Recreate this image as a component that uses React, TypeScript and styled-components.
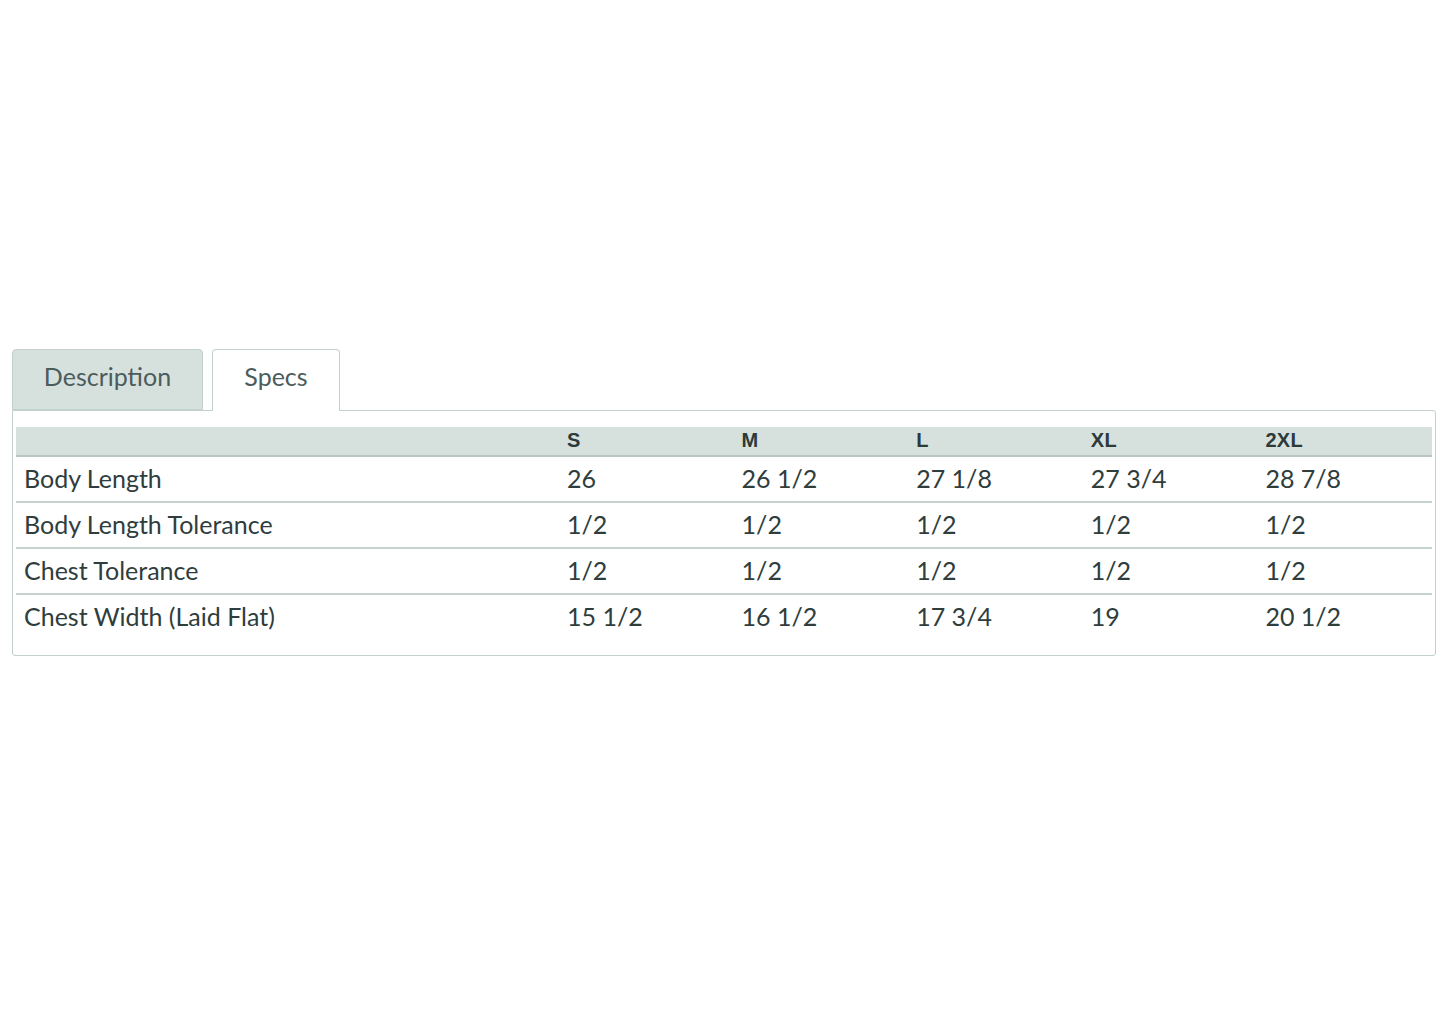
import React from "react";
import styled, { createGlobalStyle } from "styled-components";

const Global = createGlobalStyle`
  html, body { margin: 0; padding: 0; background: #ffffff; }
  body { font-family: Lato, "Noto Sans", sans-serif; color: #2f3d3d; }
`;

const Page = styled.div`
  padding: 349px 10px 0 12px;
  width: 1445px;
  box-sizing: border-box;
`;

const TabBar = styled.div`
  display: flex;
  gap: 9px;
  align-items: flex-end;
  position: relative;
  z-index: 1;
`;

const Tab = styled.div<{ $active?: boolean }>`
  box-sizing: border-box;
  height: ${(p) => (p.$active ? 62 : 61)}px;
  margin-bottom: ${(p) => (p.$active ? -1 : 0)}px;
  width: ${(p) => (p.$active ? 128 : 191)}px;
  display: flex;
  align-items: center;
  justify-content: center;
  padding-bottom: ${(p) => (p.$active ? 9 : 8)}px;
  font-size: 25px;
  color: #4b5c5c;
  background: ${(p) => (p.$active ? "#ffffff" : "#d6e1de")};
  border: 1px solid #c3d1cd;
  border-bottom: ${(p) => (p.$active ? "none" : "1px solid #c3d1cd")};
  border-radius: 4px 4px 0 0;
`;

const Panel = styled.div`
  box-sizing: border-box;
  width: 1424px;
  border: 1px solid #c3d1cd;
  border-radius: 0 3px 3px 3px;
  padding: 16px 3px 16px 3px;
`;

const Table = styled.table`
  width: 100%;
  border-collapse: collapse;
  table-layout: fixed;
`;

const HeadRow = styled.tr`
  background: #d6e1de;
  border-bottom: 2px solid #b9c7c4;
`;

const Th = styled.th<{ $first?: boolean }>`
  width: ${(p) => (p.$first ? "527px" : "auto")};
  height: 26px;
  padding: 0 8px 2px;
  text-align: left;
  font-family: "Liberation Sans", Arial, sans-serif;
  font-weight: 700;
  font-size: 20px;
  letter-spacing: 0.3px;
  color: #2c3a3a;
  vertical-align: middle;
`;

const Row = styled.tr<{ $last?: boolean }>`
  border-bottom: ${(p) => (p.$last ? "none" : "2px solid #c6d2cf")};
`;

const Td = styled.td`
  height: 41px;
  padding: 0 8px 3px;
  font-size: 25px;
  color: #2f3d3d;
  vertical-align: middle;
  white-space: nowrap;
`;

const sizes = ["S", "M", "L", "XL", "2XL"];
const rows: [string, string[]][] = [
  ["Body Length", ["26", "26 1/2", "27 1/8", "27 3/4", "28 7/8"]],
  ["Body Length Tolerance", ["1/2", "1/2", "1/2", "1/2", "1/2"]],
  ["Chest Tolerance", ["1/2", "1/2", "1/2", "1/2", "1/2"]],
  ["Chest Width (Laid Flat)", ["15 1/2", "16 1/2", "17 3/4", "19", "20 1/2"]],
];

export default function App() {
  return (
    <Page>
      <Global />
      <TabBar>
        <Tab>Description</Tab>
        <Tab $active>Specs</Tab>
      </TabBar>
      <Panel>
        <Table>
          <thead>
            <HeadRow>
              <Th $first />
              {sizes.map((s) => (
                <Th key={s}>{s}</Th>
              ))}
            </HeadRow>
          </thead>
          <tbody>
            {rows.map(([label, vals], i) => (
              <Row key={label} $last={i === rows.length - 1}>
                <Td>{label}</Td>
                {vals.map((v, j) => (
                  <Td key={j}>{v}</Td>
                ))}
              </Row>
            ))}
          </tbody>
        </Table>
      </Panel>
    </Page>
  );
}
